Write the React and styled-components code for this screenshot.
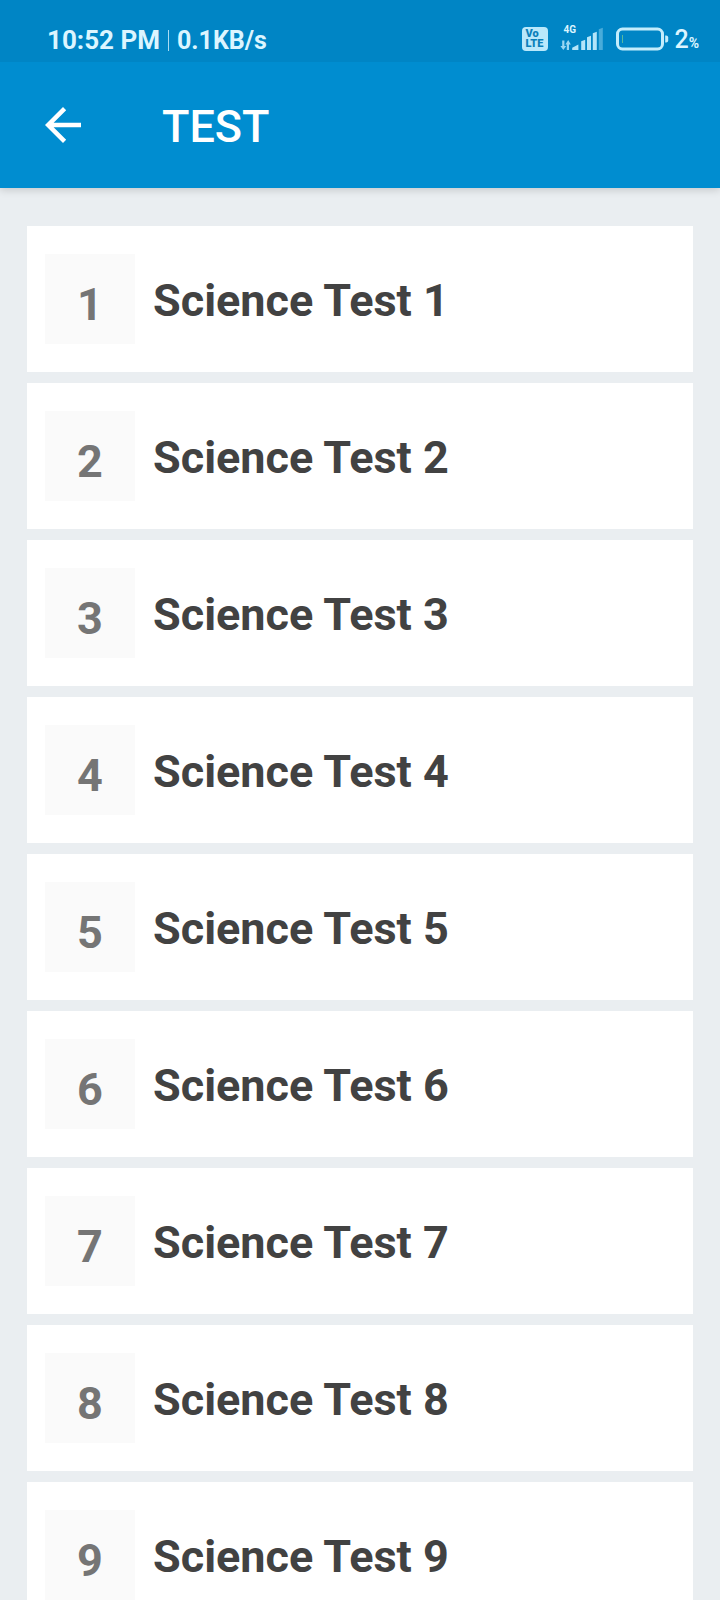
import styled, { createGlobalStyle } from "styled-components";

const GlobalStyle = createGlobalStyle`
  * {
    box-sizing: border-box;
  }
  body {
    margin: 0;
    background-color: #eaeef1;
    font-family: Roboto, "Liberation Sans", sans-serif;
  }
`
const Screen = styled.div`
  height: 100vh;
  display: flex;
  flex-direction: column;
`
const Header = styled.header`
  flex-shrink: 0;
  position: relative;
  background-color: #008dd0;
  box-shadow: 0 2px 8px rgba(0, 0, 0, 0.16);
`
const StatusBar = styled.div`
  height: 62px;
  padding: 16px 21px 0 47px;
  display: flex;
  align-items: center;
  justify-content: space-between;
  background-color: #0085c5;
  color: #dcf5ff;
`
const Clock = styled.div`
  padding-top: 2px;
  display: flex;
  align-items: baseline;
  gap: 8px;
  font-size: 26px;
  line-height: 32px;
  font-weight: 700;
`
const Speed = styled.span`
  font-size: 25px;
`
const Divider = styled.span`
  width: 1px;
  height: 21px;
  align-self: center;
  background-color: #a9dcf3;
`
const StatusIcons = styled.div`
  display: flex;
  align-items: center;
  gap: 12px;
`
const Volte = styled.span`
  width: 26px;
  height: 24px;
  padding: 2px 0 0 3px;
  border-radius: 4px;
  background-color: #b9e8fb;
  color: #0b80ba;
  font-size: 11px;
  line-height: 10px;
  font-weight: 900;
`
const VolteLine = styled.span`
  display: block;
`
const Network = styled.span`
  width: 44px;
  height: 24px;
  position: relative;
`
const NetworkType = styled.span`
  position: absolute;
  top: -3px;
  left: 3px;
  font-size: 10px;
  line-height: 12px;
  font-weight: 700;
`
const Battery = styled.span`
  display: flex;
  align-items: center;
  gap: 5px;
`
const Level = styled.span`
  padding-top: 4px;
  font-size: 25px;
  line-height: 28px;
  font-weight: 500;
`
const Percent = styled.small`
  font-size: 14px;
  font-weight: 700;
`
const Toolbar = styled.div`
  height: 126px;
  padding: 0 36px;
  display: flex;
  align-items: center;
  gap: 72px;
`
const BackButton = styled.button`
  width: 54px;
  height: 54px;
  padding: 0;
  border: none;
  background: none;
  color: white;
  cursor: pointer;
`
const Title = styled.h1`
  margin: 0;
  padding-top: 4px;
  color: white;
  font-size: 45px;
  line-height: 54px;
  font-weight: 500;
`
const List = styled.ul`
  flex: 1;
  min-height: 0;
  margin: 0;
  padding: 38px 27px;
  list-style: none;
  overflow-y: auto;
  scrollbar-width: none;
`
const Item = styled.li`
  margin-bottom: 11px;
`
const Card = styled.a`
  padding: 28px 18px;
  display: flex;
  align-items: center;
  gap: 18px;
  background-color: white;
  color: #424242;
  text-decoration: none;
`
const Badge = styled.span`
  width: 90px;
  height: 90px;
  padding-top: 12px;
  display: flex;
  justify-content: center;
  align-items: center;
  background-color: #fafafa;
  color: #757575;
  font-size: 45px;
  line-height: 54px;
  font-weight: 700;
`
const Name = styled.span`
  padding-top: 4px;
  font-size: 45px;
  line-height: 54px;
  font-weight: 700;
`

const tests = [1, 2, 3, 4, 5, 6, 7, 8, 9]

const SignalIcon = () => {
    return (
        <svg width="44" height="24" viewBox="0 0 44 24" fill="#b4e5f9" aria-hidden="true">
            <path d="M2.2 13.5h2.2v5.5h1.8l-2.9 4-2.9-4h1.8zM6.8 23v-5.6H5.4L8.2 13l2.6 4.4H9V23z" opacity="0.85"/>
            <path d="M12.2 23v-2.2l6.2-3.2V23z"/>
            <path d="M21.2 14.2l4-1.4V23h-4z"/>
            <path d="M27 10.2l4-1.4V23h-4z"/>
            <path d="M32.8 6.2l4-1.4V23h-4z"/>
            <path d="M38.8 2.2l4-1.4V23h-4z" opacity="0.4"/>
        </svg>
    )
};

const BatteryIcon = () => {
    return (
        <svg width="53" height="24" viewBox="0 0 53 24" fill="none" aria-hidden="true">
            <rect x="1.5" y="2" width="45" height="20" rx="5" stroke="#c4edfc" strokeWidth="3"/>
            <path d="M6.5 8v8" stroke="#58b99f" strokeWidth="1"/>
            <path d="M49.2 8.5h1a2 2 0 0 1 2 2v3a2 2 0 0 1-2 2h-1z" fill="#c4edfc"/>
        </svg>
    )
};

const BackIcon = () => {
    return (
        <svg width="54" height="54" viewBox="0 0 24 24" fill="currentColor" aria-hidden="true">
            <path d="M20 11H7.83l5.59-5.59L12 4l-8 8 8 8 1.41-1.41L7.83 13H20v-2z"/>
        </svg>
    )
};

const App = () => {
    return (
        <>
            <GlobalStyle/>
            <Screen>
                <Header>
                    <StatusBar>
                        <Clock>
                            <span>10:52 PM</span>
                            <Divider/>
                            <Speed>0.1KB/s</Speed>
                        </Clock>
                        <StatusIcons>
                            <Volte>
                                <VolteLine>Vo</VolteLine>
                                <VolteLine>LTE</VolteLine>
                            </Volte>
                            <Network>
                                <SignalIcon/>
                                <NetworkType>4G</NetworkType>
                            </Network>
                            <Battery>
                                <BatteryIcon/>
                                <Level>2<Percent>%</Percent></Level>
                            </Battery>
                        </StatusIcons>
                    </StatusBar>
                    <Toolbar>
                        <BackButton aria-label="Back">
                            <BackIcon/>
                        </BackButton>
                        <Title>TEST</Title>
                    </Toolbar>
                </Header>
                <List>
                    {tests.map((number) => (
                        <Item key={number}>
                            <Card href={`#test-${number}`}>
                                <Badge>{number}</Badge>
                                <Name>Science Test {number}</Name>
                            </Card>
                        </Item>
                    ))}
                </List>
            </Screen>
        </>
    )
};

export default App
